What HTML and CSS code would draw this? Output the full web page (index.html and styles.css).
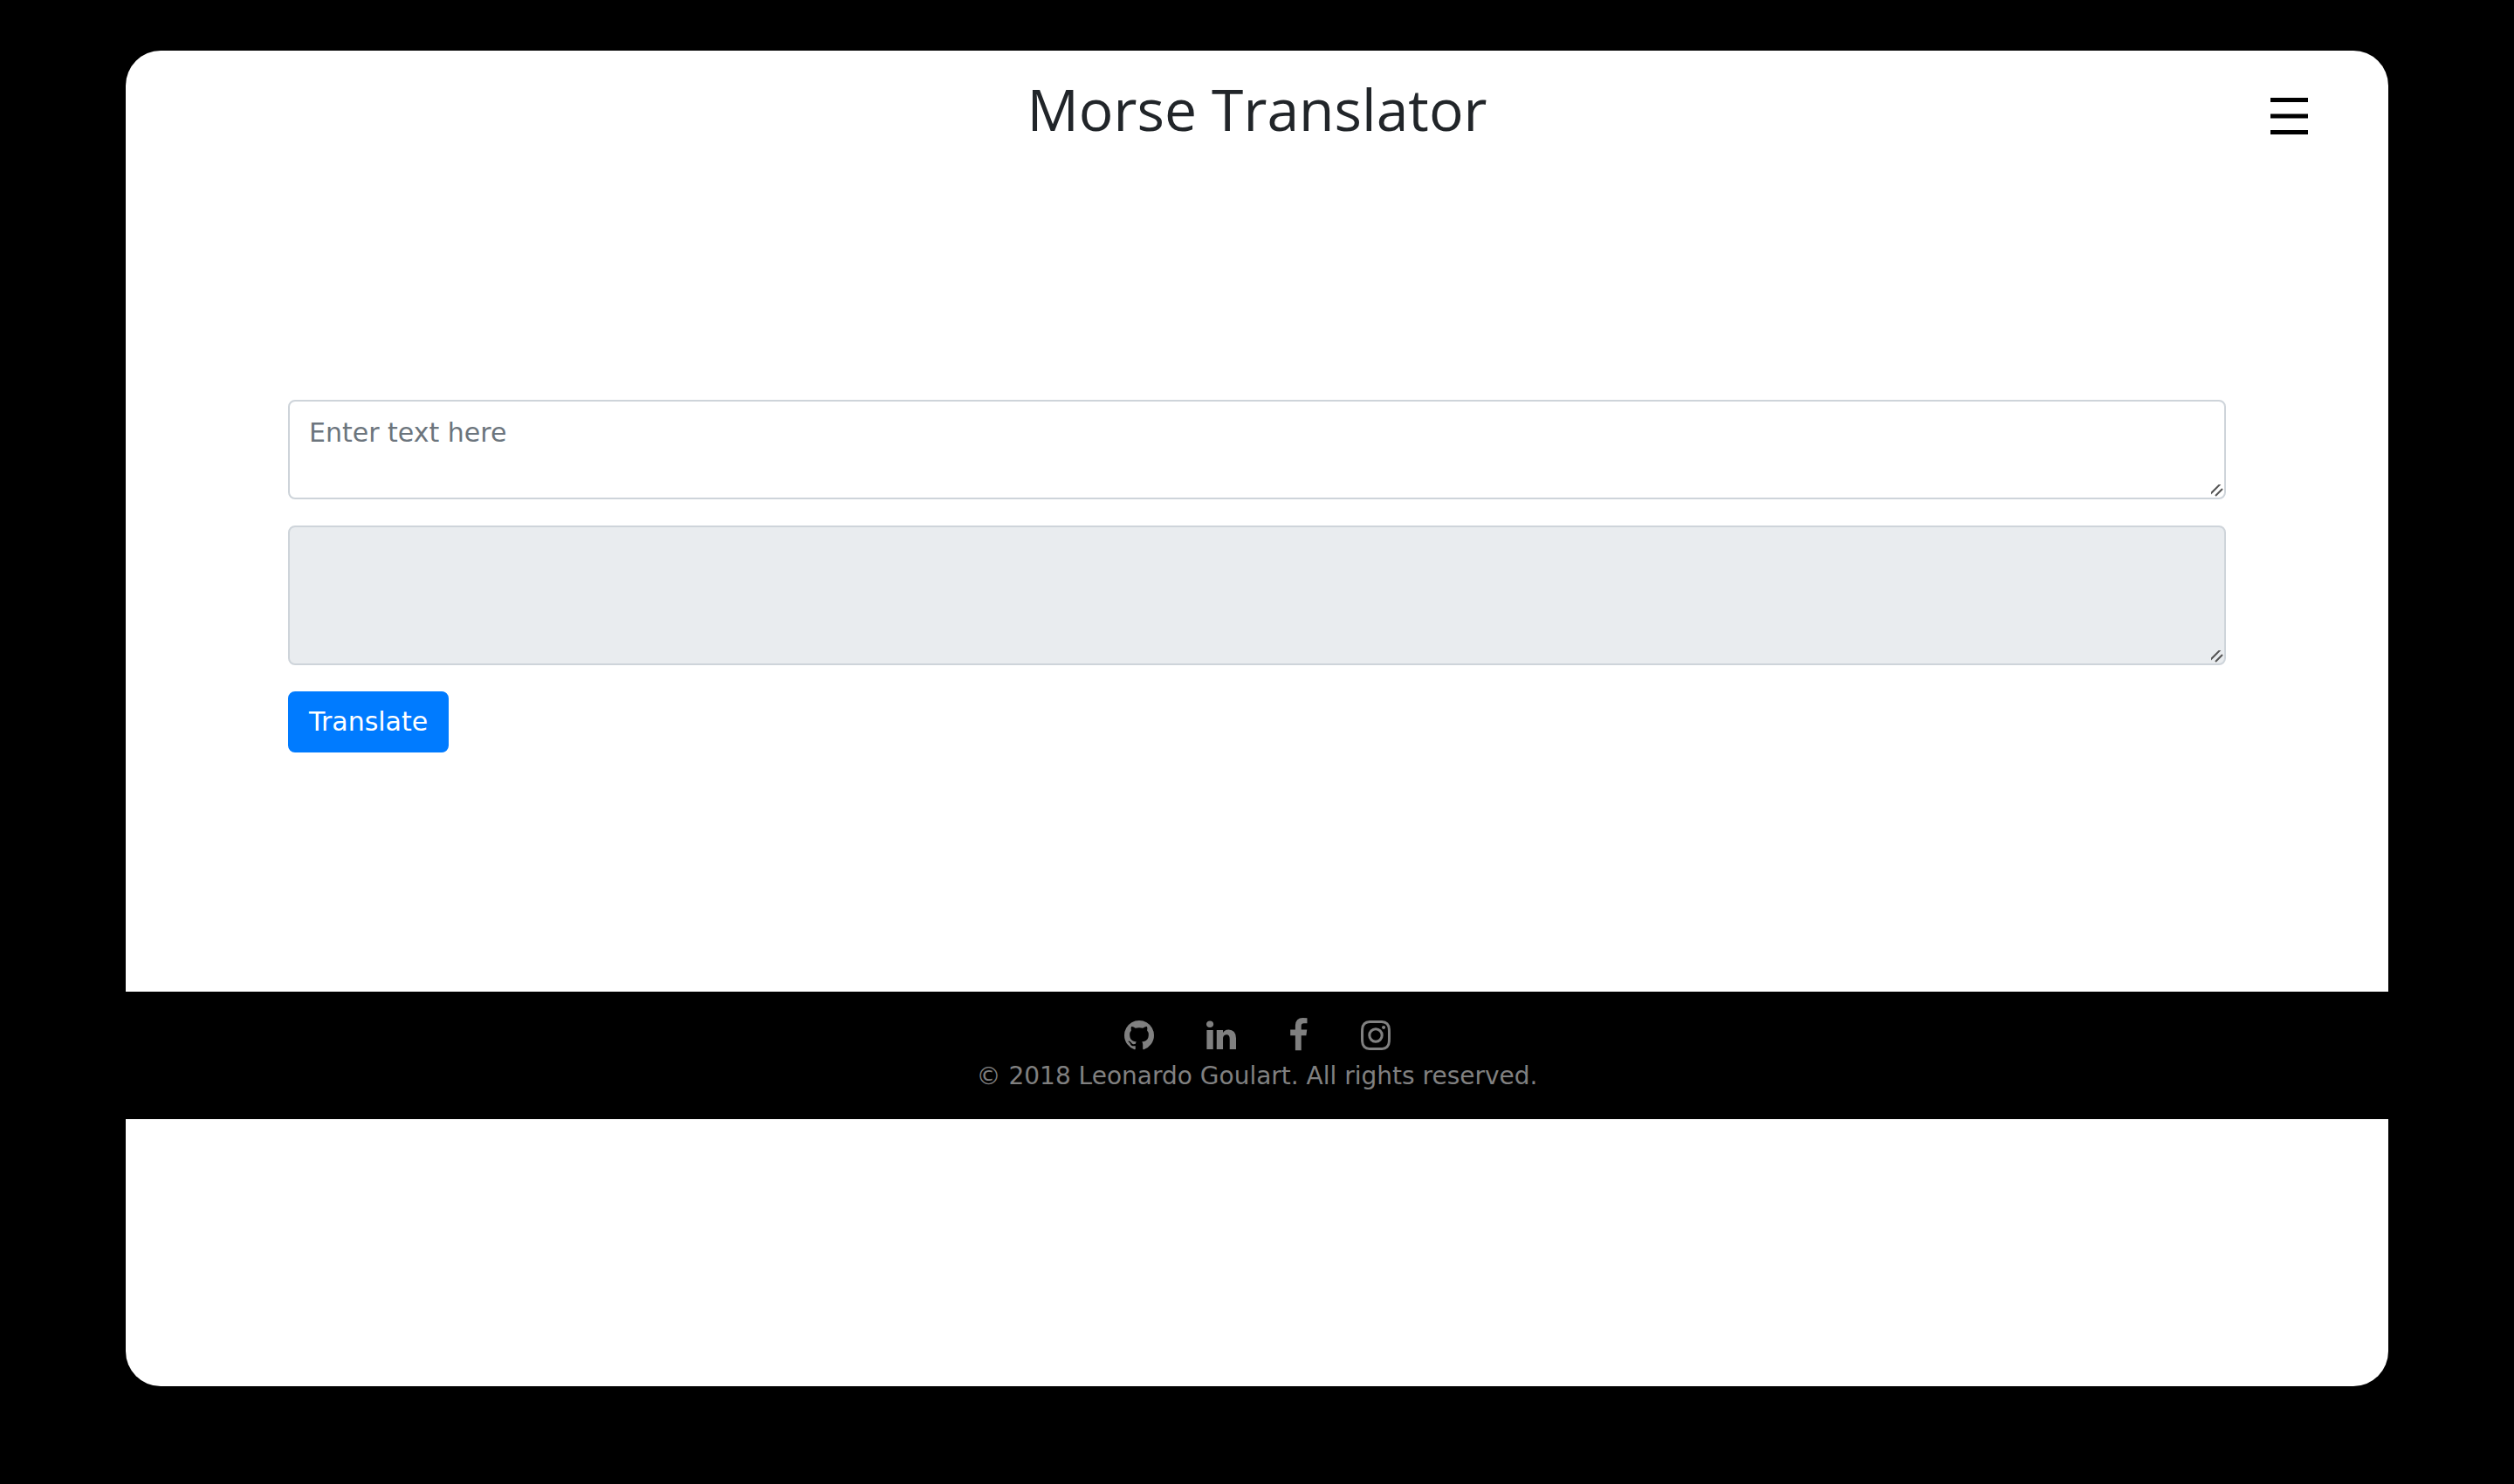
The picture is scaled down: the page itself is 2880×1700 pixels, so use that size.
FILE: index.html
```html
<!DOCTYPE html>
<html lang="en">
<head>
<meta charset="utf-8">
<meta name="viewport" content="width=device-width, initial-scale=1">
<title>Morse Translator</title>
<link rel="stylesheet" href="styles.css">
</head>
<body>
<div class="card">
  <header class="header">
    <h1 class="title">Morse Translator</h1>
    <button class="menu" type="button" aria-label="Menu">
      <svg width="43" height="42" viewBox="0 0 43 42" aria-hidden="true"><path d="M0 0h43v5H0zM0 18.500h43v5H0zM0 37h43v5H0z"/></svg>
    </button>
  </header>
  <main class="main">
    <form class="form">
      <textarea class="field field-input" aria-label="Text" placeholder="Enter text here"></textarea>
      <textarea class="field field-output" aria-label="Morse code" readonly></textarea>
      <button class="submit" type="button">Translate</button>
    </form>
  </main>
  <footer class="footer">
    <nav class="social" aria-label="Social">
      <a href="#github" aria-label="GitHub"><svg width="34" height="40" viewBox="128 0 1536 1792"><path d="M896 128q209 0 385.500 103t279.500 279.500 103 385.500q0 251-146.500 451.500t-378.500 277.500q-27 5-40-7t-13-30q0-3 .5-76.500t.5-134.500q0-97-52-142 57-6 102.500-18t94-39 81-66.500 53-105 20.500-150.500q0-119-79-206 37-91-8-204-28-9-81 11t-92 44l-38 24q-93-26-192-26t-192 26q-16-11-42.500-27t-83.500-38.500-85-13.500q-45 113-8 204-79 87-79 206 0 85 20.500 150t52.500 105 80.500 67 94 39 102.500 18q-39 36-49 103-21 10-45 15t-57 5-65.500-21.500-55.500-62.500q-19-32-48.500-52t-49.500-24l-20-3q-21 0-29 4.500t-5 11.500 9 14 13 12l7 5q22 10 43.500 38t31.500 51l10 23q13 38 44 61.500t67 30 69.500 7 55.500-3.500l23-4q0 38 .5 88.500t.5 54.500q0 18-13 30t-40 7q-232-77-378.500-277.500t-146.500-451.500q0-209 103-385.500t279.500-279.500 385.500-103z"/></svg></a>
      <a href="#linkedin" aria-label="LinkedIn"><svg width="34" height="40" viewBox="128 0 1536 1792"><path d="M477 625v991h-330v-991h330zm21-306q1 73-50.500 122t-135.500 49h-2q-82 0-132-49t-50-122q0-74 51.500-122.500t134.500-48.500 133 48.500 51 122.500zm1166 729v568h-329v-530q0-105-40.500-164.500t-126.500-59.500q-63 0-105.500 34.500t-63.500 85.500q-11 30-11 81v553h-329q2-399 2-647t-1-296l-1-48h329v144h-2q20-32 41-56t56.500-52 87-43.500 114.500-15.500q171 0 275 113.500t104 332.500z"/></svg></a>
      <a href="#facebook" aria-label="Facebook"><svg width="23" height="40" viewBox="384 0 1024 1792"><path d="M1343 12v264h-157q-86 0-116 36t-30 108v189h293l-39 296h-254v759h-306v-759h-255v-296h255v-218q0-186 104-288.500t277-102.500q147 0 228 12z"/></svg></a>
      <a href="#instagram" aria-label="Instagram"><svg width="34" height="40" viewBox="128 0 1536 1792"><path d="M1152 896q0-106-75-181t-181-75-181 75-75 181 75 181 181 75 181-75 75-181zm138 0q0 164-115 279t-279 115-279-115-115-279 115-279 279-115 279 115 115 279zm108-410q0 38-27 65t-65 27-65-27-27-65 27-65 65-27 65 27 27 65zm-502-220q-7 0-76.500-.5t-105.500 0-96.500 3-103 10-71.500 18.500q-50 20-88 58t-58 88q-11 29-18.500 71.500t-10 103-3 96.500 0 105.500.5 76.500-.5 76.500 0 105.500 3 96.500 10 103 18.500 71.500q20 50 58 88t88 58q29 11 71.500 18.500t103 10 96.500 3 105.500 0 76.500-.5 76.500.5 105.500 0 96.500-3 103-10 71.500-18.500q50-20 88-58t58-88q11-29 18.500-71.500t10-103 3-96.500 0-105.500-.5-76.500.5-76.500 0-105.500-3-96.500-10-103-18.500-71.500q-20-50-58-88t-88-58q-29-11-71.500-18.500t-103-10-96.500-3-105.500 0-76.500.5zm768 630q0 229-5 317-10 208-124 322t-322 124q-88 5-317 5t-317-5q-208-10-322-124t-124-322q-5-88-5-317t5-317q10-208 124-322t322-124q88-5 317-5t317 5q208 10 322 124t124 322q5 88 5 317z"/></svg></a>
    </nav>
    <p class="copyright">© 2018 Leonardo Goulart. All rights reserved.</p>
  </footer>
</div>
</body>
</html>
```
FILE: styles.css
```css
* {
  box-sizing: border-box;
}

body {
  margin: 0;
  padding: 58px 5%;
  background: #000;
  color: #212529;
  font-family: "DejaVu Sans", Verdana, sans-serif;
  font-size: 30px;
  line-height: 45px;
}

.card {
  min-height: 90vh;
  border-radius: 40px;
  background: #fff;
}

.header {
  display: grid;
  grid-template-columns: 1fr auto 1fr;
  align-items: center;
  padding: 22px 92px 0;
}

.title {
  grid-column: 2;
  margin: 0;
  font-family: "Open Sans", sans-serif;
  font-size: 66px;
  font-weight: 400;
  line-height: 88px;
}

.menu {
  justify-self: end;
  margin-top: 18px;
  padding: 0;
  border: 0;
  background: none;
  cursor: pointer;
}

.menu svg,
.social svg {
  display: block;
}

.main {
  max-width: 2280px;
  margin: 0 auto;
  padding: 290px 30px 274px;
}

.form {
  display: flex;
  flex-direction: column;
  align-items: flex-start;
  gap: 30px;
}

.field {
  display: block;
  width: 100%;
  margin: 0;
  padding: 13px 22px;
  border: 2px solid #ced4da;
  border-radius: 8px;
  background: #fff;
  color: #495057;
  font: inherit;
  resize: vertical;
}

.field::placeholder {
  color: #6c757d;
  opacity: 1;
}

.field::-webkit-scrollbar {
  width: 20px;
  height: 20px;
}

.field::-webkit-resizer {
  background: url("data:image/svg+xml,%3Csvg xmlns='http://www.w3.org/2000/svg' width='20' height='20'%3E%3Cpath d='M2 18L18 2M10 18L18 10' stroke='%23555' stroke-width='2'/%3E%3C/svg%3E") right bottom no-repeat;
}

.field-input {
  height: 114px;
}

.field-output {
  height: 160px;
  background: #e9ecef;
}

.submit {
  padding: 12px 22px;
  border: 2px solid #007bff;
  border-radius: 8px;
  background: #007bff;
  color: #fff;
  font: inherit;
  line-height: 42px;
  cursor: pointer;
}

.footer {
  padding: 30px 30px 27px;
  background: #000;
  color: #808080;
  text-align: center;
}

.social {
  display: flex;
  justify-content: center;
  gap: 60px;
}

.social a {
  color: inherit;
}

.social svg {
  fill: currentColor;
}

.copyright {
  margin: 4px 0 0;
  font-size: 28px;
}
```
